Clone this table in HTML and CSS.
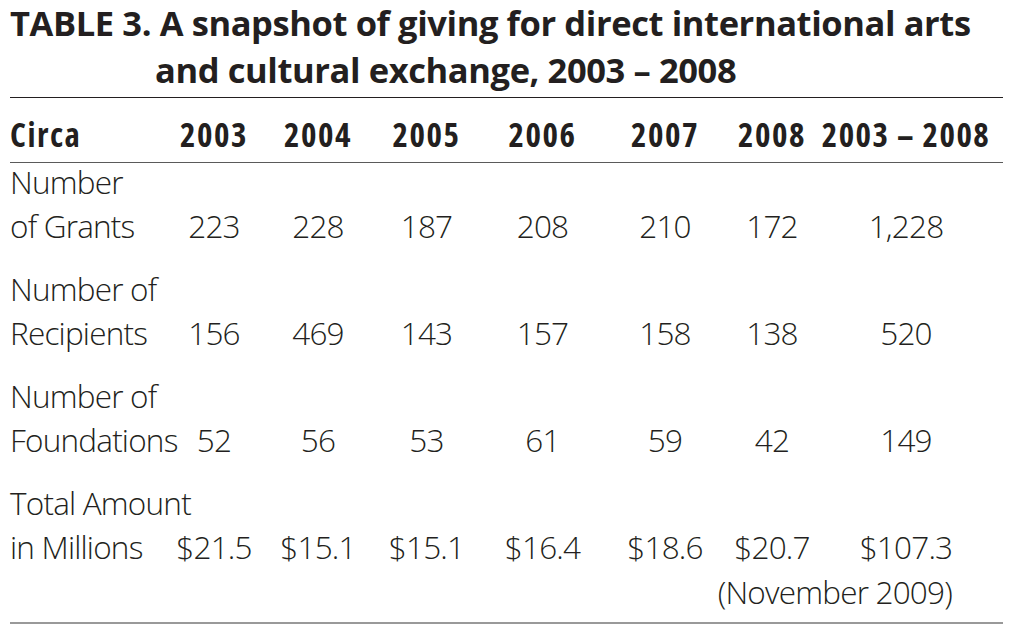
FILE: index.html
```html
<!DOCTYPE html>
<html lang="en">
<head>
<meta charset="utf-8">
<title>Table 3</title>
<link rel="stylesheet" href="styles.css">
</head>
<body>
<div class="page">
  <h1 class="title">
    <span class="title-line">TABLE 3. A snapshot of giving for direct international arts</span>
    <span class="title-line title-indent">and cultural exchange, 2003 – 2008</span>
  </h1>
  <table class="data">
    <colgroup>
      <col class="c-label"><col class="c1"><col class="c2"><col class="c3"><col class="c4"><col class="c5"><col class="c6"><col class="c7">
    </colgroup>
    <thead>
      <tr>
        <th class="lbl">Circa</th>
        <th>2003</th><th>2004</th><th>2005</th><th>2006</th><th>2007</th><th>2008</th><th class="last">2003 – 2008</th>
      </tr>
    </thead>
    <tbody>
      <tr>
        <td class="lbl"><span class="l1">Number</span><span class="l2">of Grants</span></td>
        <td>223</td><td>228</td><td>187</td><td>208</td><td>210</td><td>172</td><td class="last">1,228</td>
      </tr>
      <tr>
        <td class="lbl"><span class="l1">Number of</span><span class="l2">Recipients</span></td>
        <td>156</td><td>469</td><td>143</td><td>157</td><td>158</td><td>138</td><td class="last">520</td>
      </tr>
      <tr>
        <td class="lbl"><span class="l1">Number of</span><span class="l2">Foundations</span></td>
        <td>52</td><td>56</td><td>53</td><td>61</td><td>59</td><td>42</td><td class="last">149</td>
      </tr>
      <tr class="row-total">
        <td class="lbl"><span class="l1">Total Amount</span><span class="l2">in Millions</span></td>
        <td>$21.5</td><td>$15.1</td><td>$15.1</td><td>$16.4</td><td>$18.6</td><td>$20.7</td><td class="last">$107.3</td>
      </tr>
      <tr class="row-note">
        <td colspan="8" class="note">(November 2009)</td>
      </tr>
    </tbody>
  </table>
</div>
</body>
</html>
```
FILE: styles.css
```css
html, body {
  margin: 0;
  padding: 0;
  background: #ffffff;
}

.page {
  width: 993px;
  padding-left: 10px;
  font-family: "Open Sans", "Noto Sans", sans-serif;
  color: #231f20;
}

.title {
  margin: -1px 0 0 0;
  padding: 0 0 4px 0;
  font-size: 34.5px;
  line-height: 47px;
  font-weight: 700;
  font-stretch: 88%;
  letter-spacing: -0.4px;
  border-bottom: 1px solid #231f20;
}

.title-line {
  display: block;
  white-space: nowrap;
}

.title-indent {
  padding-left: 145px;
}

.data {
  width: 993px;
  border-collapse: collapse;
  table-layout: fixed;
  border-bottom: 2px solid #999999;
}

.c-label { width: 150px; }
.c1 { width: 108px; }
.c2 { width: 100px; }
.c3 { width: 117px; }
.c4 { width: 115px; }
.c5 { width: 130px; }
.c6 { width: 84px; }
.c7 { width: 189px; }

.data th,
.data td {
  padding: 0;
  text-align: center;
  white-space: nowrap;
}

.data th {
  font-size: 33px;
  line-height: 44px;
  font-weight: 700;
  font-stretch: 75%;
  letter-spacing: 1.5px;
  padding-top: 15px;
  padding-bottom: 5px;
  border-bottom: 1px solid #5a5a5a;
}

.data td {
  font-size: 31.5px;
  font-weight: 300;
  font-stretch: 88%;
  letter-spacing: -0.8px;
  line-height: 51px;
  vertical-align: bottom;
  padding-bottom: 19px;
}

.data .lbl {
  text-align: left;
  overflow: visible;
}

.data .last {
  padding-right: 5px;
}

.l1 {
  display: block;
  line-height: 37px;
}

.l2 {
  display: block;
  line-height: 51px;
}

.row-total td {
  padding-bottom: 0;
}

.data td.note {
  text-align: right;
  line-height: 40px;
  padding-right: 51px;
  padding-bottom: 10px;
}
```
